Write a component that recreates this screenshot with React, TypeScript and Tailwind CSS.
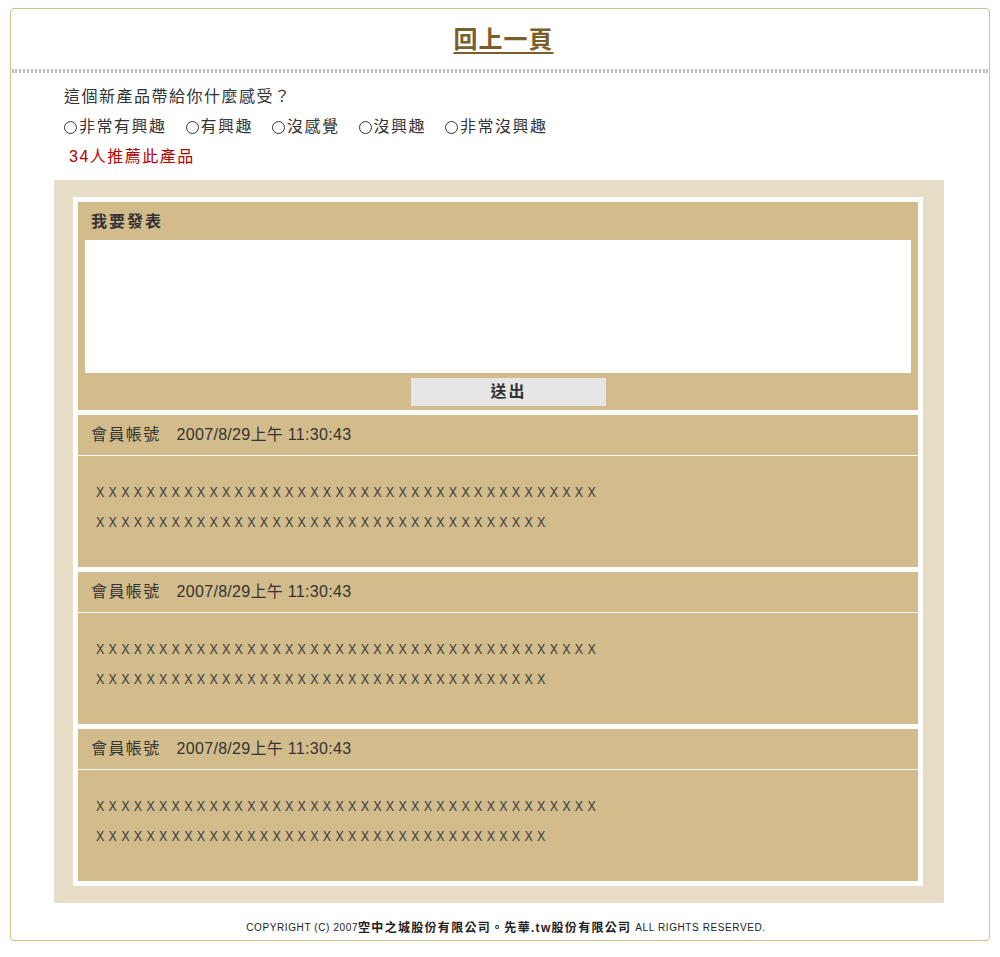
import React from 'react';

const cjk = { fontFamily: '"Liberation Sans", "Noto Sans CJK TC", sans-serif' };

const options = ['非常有興趣', '有興趣', '沒感覺', '沒興趣', '非常沒興趣'];

const comments = [
  { user: '會員帳號', time: '2007/8/29上午 11:30:43' },
  { user: '會員帳號', time: '2007/8/29上午 11:30:43' },
  { user: '會員帳號', time: '2007/8/29上午 11:30:43' },
];

export default function App() {
  return (
    <div className="bg-white min-h-[957px] pt-[8px] px-[10px]" style={cjk}>
      <div className="border border-[#d5be8a] rounded-[4px] w-[980px]">
        {/* Header */}
        <div className="h-[60px] flex items-center justify-center pt-[1px] pl-[7px]">
          <a href="#" className="text-[24px] font-bold text-[#7b5e2a] underline underline-offset-[4px] tracking-[1px] leading-none">
            回上一頁
          </a>
        </div>
        <div className="h-[4px] border-t-2 border-b-2 border-dotted border-[#bdbdbd] mx-[1px]" />

        {/* Question */}
        <div className="pl-[53px] mt-[9px] text-[16px] text-[#333] tracking-[1.5px]">
          <div className="h-[30px] leading-[30px]">這個新產品帶給你什麼感受？</div>
          <div className="h-[30px] flex items-center gap-[19px]">
            {options.map((o) => (
              <label key={o} className="flex items-center">
                <span className="inline-block w-[13px] h-[13px] rounded-full border border-[#333] mr-[2px]" />
                <span>{o}</span>
              </label>
            ))}
          </div>
          <div className="h-[30px] leading-[30px] text-[#b30000] pl-[5px]">34人推薦此產品</div>
        </div>

        {/* Comments box */}
        <div className="ml-[43px] mt-[8px] w-[890px] bg-[#e8ddc6] pt-[17px] pl-[19px] pr-[21px] pb-[17px]">
          <div className="bg-white p-[5px] flex flex-col gap-[5px]">
            <div className="bg-[#d3bc8b] pt-[10px] pb-[4px]">
              <div className="pl-[13px] h-[20px] leading-[20px] text-[16px] font-bold text-[#333] tracking-[2px]">我要發表</div>
              <textarea className="block mt-[8px] mx-[7px] w-[826px] h-[133px] bg-white resize-none outline-none" />
              <button className="block mt-[5px] ml-[333px] w-[195px] h-[28px] bg-[#e6e6e6] text-[16px] font-bold text-[#333] tracking-[2px]">
                送出
              </button>
            </div>
            {comments.map((c, i) => (
              <div key={i} className="bg-[#d3bc8b]">
                <div className="h-[41px] flex items-center pl-[13px] text-[16px] text-[#333] border-b border-white">
                  <span className="tracking-[1.4px]">{c.user}</span>
                  <span className="ml-[16px] tracking-[0.3px]">{c.time}</span>
                </div>
                <div
                  className="h-[111px] pt-[22px] pl-[18px] text-[14px] leading-[30px] text-[#444] tracking-[4.2px]"
                  style={{ fontFamily: '"Liberation Mono", monospace' }}
                >
                  <div>XXXXXXXXXXXXXXXXXXXXXXXXXXXXXXXXXXXXXXXX</div>
                  <div>XXXXXXXXXXXXXXXXXXXXXXXXXXXXXXXXXXXX</div>
                </div>
              </div>
            ))}
          </div>
        </div>

        {/* Footer */}
        <div className="pt-[18px] pb-[5px] flex items-center justify-center h-[37px] text-[#222] pl-[12px]">
          <span className="text-[10px] tracking-[0.6px] leading-[14px]">COPYRIGHT (C) 2007</span>
          <span className="text-[12px] font-bold tracking-[1.3px] leading-[14px]">空中之城股份有限公司。先華.tw股份有限公司</span>
          <span className="text-[10px] tracking-[0.6px] leading-[14px] ml-[4px]">ALL RIGHTS RESERVED.</span>
        </div>
      </div>
    </div>
  );
}
